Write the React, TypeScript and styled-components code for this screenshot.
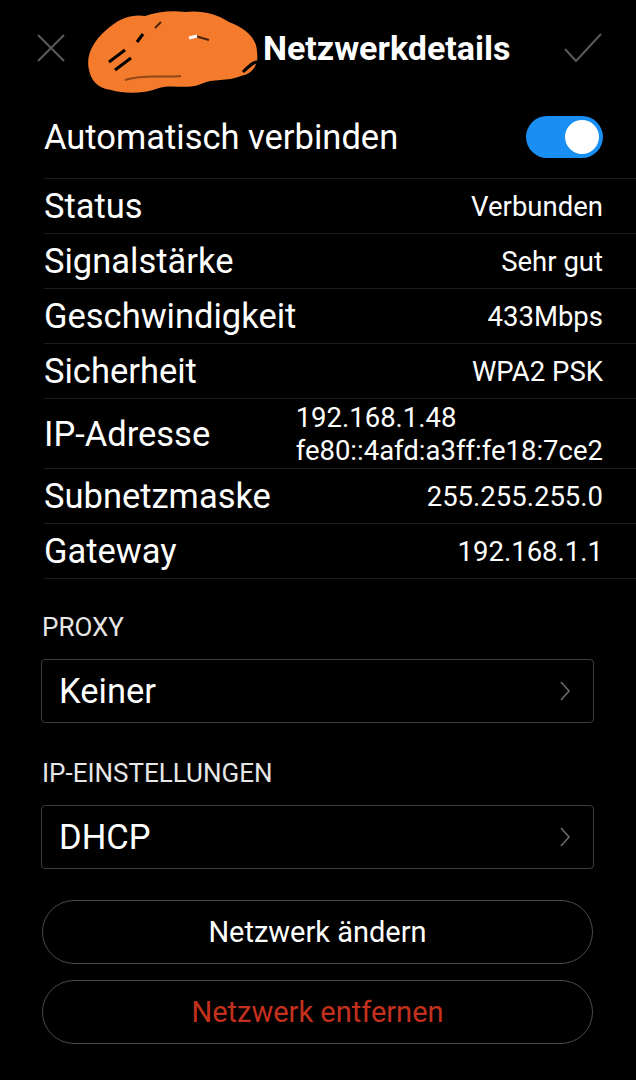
import React from "react";
import styled, { createGlobalStyle } from "styled-components";

const GlobalStyle = createGlobalStyle`
  html, body {
    margin: 0;
    padding: 0;
    background: #000000;
  }
  body {
    font-family: Roboto, "Noto Sans", "Liberation Sans", sans-serif;
    color: #ffffff;
  }
`;

interface InfoItem {
  label: string;
  values: string[];
}

const infoItems: InfoItem[] = [
  { label: "Status", values: ["Verbunden"] },
  { label: "Signalstärke", values: ["Sehr gut"] },
  { label: "Geschwindigkeit", values: ["433Mbps"] },
  { label: "Sicherheit", values: ["WPA2 PSK"] },
  { label: "IP-Adresse", values: ["192.168.1.48", "fe80::4afd:a3ff:fe18:7ce2"] },
  { label: "Subnetzmaske", values: ["255.255.255.0"] },
  { label: "Gateway", values: ["192.168.1.1"] },
];

const CloseIcon = () => (
  <svg width="30" height="30" viewBox="0 0 30 30">
    <path d="M2 2 L28 28 M28 2 L2 28" stroke="#5a5a5a" strokeWidth="2" fill="none" />
  </svg>
);

const CheckIcon = () => (
  <svg width="40" height="30" viewBox="0 0 40 30">
    <path d="M2 16 L13 28 L38 1" stroke="#5a5a5a" strokeWidth="2" fill="none" />
  </svg>
);

// orange marker scribble hiding the network name
const Scribble = () => (
  <svg width="176" height="84" viewBox="0 0 176 84">
    <path
      d="M4 60 C0 44 10 28 26 16 C36 8 48 4 60 6 C72 2 86 0 100 2 C116 0 132 4 144 12 C160 18 172 28 172 42 C174 54 168 64 156 66 C142 72 128 68 116 74 C102 80 88 74 74 78 C58 84 40 84 26 80 C12 78 6 70 4 60 Z"
      fill="#f47b2b"
    />
    <path d="M24 52 L40 40 M30 60 L46 48 M52 32 L58 24" stroke="#000000" strokeWidth="3" fill="none" />
    <path d="M110 26 L124 30 M70 18 L76 12" stroke="#000000" strokeWidth="2" fill="none" opacity="0.7" />
    <path d="M40 70 C58 64 78 68 96 66" stroke="#2a1306" strokeWidth="2" fill="none" opacity="0.5" />
    <path d="M158 62 C164 56 168 52 172 52" stroke="#000000" strokeWidth="3" fill="none" />
    <path d="M104 28 L112 26" stroke="#ffffff" strokeWidth="3" />
  </svg>
);

const Chevron = () => (
  <svg width="12" height="20" viewBox="0 0 12 20">
    <path d="M2 1 L10 10 L2 19" stroke="#6a6a6a" strokeWidth="1.6" fill="none" />
  </svg>
);

const App = () => {
  return (
    <Page>
      <GlobalStyle />
      <Header>
        <IconButton>
          <CloseIcon />
        </IconButton>
        <Title>
          <Scribble />
          <TitleText>Netzwerkdetails</TitleText>
        </Title>
        <IconButton>
          <CheckIcon />
        </IconButton>
      </Header>

      <List>
        <ToggleRow>
          <Label>Automatisch verbinden</Label>
          <Toggle>
            <Knob />
          </Toggle>
        </ToggleRow>
        {infoItems.map((item) => (
          <InfoRow key={item.label} tall={item.values.length > 1}>
            <Label>{item.label}</Label>
            <ValueBox multi={item.values.length > 1}>
              {item.values.map((v) => (
                <Value key={v}>{v}</Value>
              ))}
            </ValueBox>
          </InfoRow>
        ))}
      </List>

      <Section>
        <SectionTitle>PROXY</SectionTitle>
        <SelectBox>
          <SelectText>Keiner</SelectText>
          <Chevron />
        </SelectBox>
      </Section>

      <Section>
        <SectionTitle>IP-EINSTELLUNGEN</SectionTitle>
        <SelectBox>
          <SelectText>DHCP</SelectText>
          <Chevron />
        </SelectBox>
      </Section>

      <Buttons>
        <PillButton>Netzwerk ändern</PillButton>
        <PillButton danger>Netzwerk entfernen</PillButton>
      </Buttons>
    </Page>
  );
};

export default App;

const Page = styled.div`
  width: 636px;
  height: 1080px;
  background: #000000;
  overflow: hidden;
`;

const Header = styled.div`
  display: flex;
  align-items: center;
  justify-content: space-between;
  height: 96px;
  padding: 0 33px 0 36px;
  box-sizing: border-box;
`;

const IconButton = styled.div`
  display: flex;
  align-items: center;
  justify-content: center;
`;

const Title = styled.div`
  display: flex;
  align-items: center;
  margin-left: 19px;
  margin-top: 8px;
  flex: 1;
`;

const TitleText = styled.span`
  margin-left: 2px;
  margin-top: -8px;
  font-size: 34px;
  font-weight: 700;
  color: #ffffff;
`;

const List = styled.div`
  margin-left: 44px;
`;

const ToggleRow = styled.div`
  display: flex;
  align-items: center;
  justify-content: space-between;
  height: 82px;
  padding-right: 33px;
  border-bottom: 1px solid #1c1c1c;
`;

const Toggle = styled.div`
  display: flex;
  align-items: center;
  justify-content: flex-end;
  width: 77px;
  height: 42px;
  padding: 0 4px;
  box-sizing: border-box;
  border-radius: 21px;
  background: #1a8ff3;
`;

const Knob = styled.div`
  width: 34px;
  height: 34px;
  border-radius: 50%;
  background: #ffffff;
`;

const InfoRow = styled.div<{ tall?: boolean }>`
  display: flex;
  align-items: center;
  justify-content: space-between;
  height: ${(p) => (p.tall ? 69 : 54)}px;
  padding-right: 33px;
  border-bottom: 1px solid #1c1c1c;
`;

const Label = styled.span`
  font-size: 34.5px;
  color: #ffffff;
`;

const ValueBox = styled.div<{ multi?: boolean }>`
  display: flex;
  flex-direction: column;
  align-items: ${(p) => (p.multi ? "flex-start" : "flex-end")};
`;

const Value = styled.span`
  font-size: 27.5px;
  line-height: 33px;
  color: #ffffff;
`;

const Section = styled.div`
  padding: 33px 42px 0 41px;

  & + & {
    padding-top: 35px;
  }
`;

const SectionTitle = styled.div`
  font-size: 26px;
  color: #e6e6e6;
  margin-left: 1px;
  margin-bottom: 17px;
`;

const SelectBox = styled.div`
  display: flex;
  align-items: center;
  justify-content: space-between;
  height: 64px;
  padding: 0 22px 0 17px;
  box-sizing: border-box;
  border: 1.5px solid #3c3c3c;
  border-radius: 4px;
`;

const SelectText = styled.span`
  font-size: 34.5px;
  color: #ffffff;
`;

const Buttons = styled.div`
  display: flex;
  flex-direction: column;
  gap: 16px;
  padding: 31px 43px 0 42px;
`;

const PillButton = styled.div<{ danger?: boolean }>`
  display: flex;
  align-items: center;
  justify-content: center;
  height: 64px;
  box-sizing: border-box;
  border: 1.5px solid #4a4a4a;
  border-radius: 32px;
  font-size: 29px;
  color: ${(p) => (p.danger ? "#c4301e" : "#ffffff")};
`;
